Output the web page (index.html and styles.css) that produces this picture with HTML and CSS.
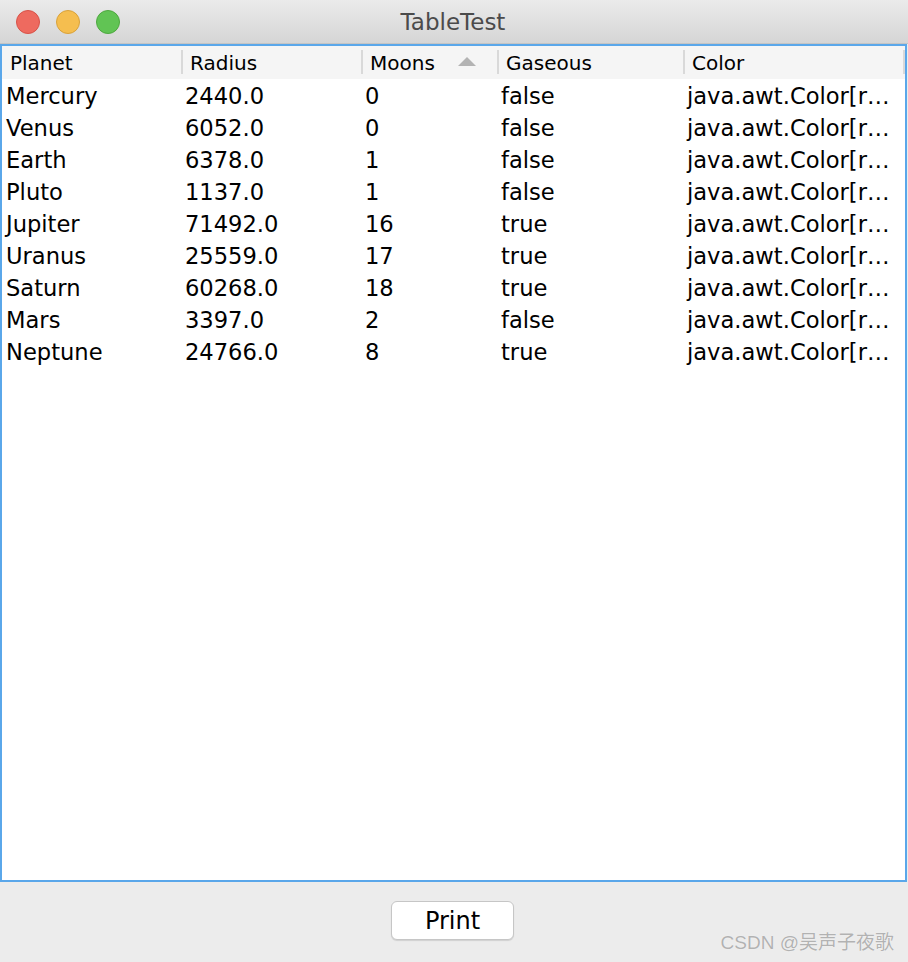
FILE: index.html
```html
<!DOCTYPE html>
<html lang="en">
<head>
    <meta charset="UTF-8">
    <title>TableTest</title>
    <link rel="stylesheet" href="styles.css">
</head>
<body>
    <div class="window">
        <div class="titlebar">
            <div class="lights">
                <span class="light red"></span>
                <span class="light yellow"></span>
                <span class="light green"></span>
            </div>
            <div class="title">TableTest</div>
            <div></div>
        </div>

        <div class="table-pane">
            <div class="table">
                <div class="head first">Planet</div>
                <div class="head">Radius</div>
                <div class="head sorted">Moons <span class="sort-arrow"></span></div>
                <div class="head">Gaseous</div>
                <div class="head last">Color</div>

                <div class="cell">Mercury</div><div class="cell">2440.0</div><div class="cell">0</div><div class="cell">false</div><div class="cell">java.awt.Color[r…</div>
                <div class="cell">Venus</div><div class="cell">6052.0</div><div class="cell">0</div><div class="cell">false</div><div class="cell">java.awt.Color[r…</div>
                <div class="cell">Earth</div><div class="cell">6378.0</div><div class="cell">1</div><div class="cell">false</div><div class="cell">java.awt.Color[r…</div>
                <div class="cell">Pluto</div><div class="cell">1137.0</div><div class="cell">1</div><div class="cell">false</div><div class="cell">java.awt.Color[r…</div>
                <div class="cell">Jupiter</div><div class="cell">71492.0</div><div class="cell">16</div><div class="cell">true</div><div class="cell">java.awt.Color[r…</div>
                <div class="cell">Uranus</div><div class="cell">25559.0</div><div class="cell">17</div><div class="cell">true</div><div class="cell">java.awt.Color[r…</div>
                <div class="cell">Saturn</div><div class="cell">60268.0</div><div class="cell">18</div><div class="cell">true</div><div class="cell">java.awt.Color[r…</div>
                <div class="cell">Mars</div><div class="cell">3397.0</div><div class="cell">2</div><div class="cell">false</div><div class="cell">java.awt.Color[r…</div>
                <div class="cell">Neptune</div><div class="cell">24766.0</div><div class="cell">8</div><div class="cell">true</div><div class="cell">java.awt.Color[r…</div>
            </div>
        </div>

        <div class="button-bar">
            <button class="print-btn">Print</button>
        </div>

        <div class="watermark">CSDN @吴声子夜歌</div>
    </div>
</body>
</html>
```

FILE: styles.css
```css
body {
    margin: 0;
    background-color: #ececec;
    font-family: "DejaVu Sans", Verdana, sans-serif;
    color: #000;
}

.window {
    position: relative;
    height: 962px;
    display: flex;
    flex-direction: column;
}

/* Title bar */
.titlebar {
    height: 44px;
    display: grid;
    grid-template-columns: 1fr auto 1fr;
    align-items: center;
    background: linear-gradient(#ebebeb, #d5d5d5);
    box-sizing: border-box;
    border-bottom: 1px solid #c4c4c4;
}

.lights {
    display: flex;
    gap: 16px;
    padding-left: 16px;
}

.light {
    width: 24px;
    height: 24px;
    border-radius: 50%;
    box-sizing: border-box;
}

.light.red {
    background-color: #ee6a5f;
    border: 1px solid #d85248;
}

.light.yellow {
    background-color: #f5be4f;
    border: 1px solid #d9a23a;
}

.light.green {
    background-color: #61c454;
    border: 1px solid #4ea83f;
}

.title {
    font-size: 23px;
    color: #4b4b4b;
    padding-right: 2px;
}

/* Table */
.table-pane {
    height: 838px;
    margin-right: 1px;
    border: 2px solid #5aa7ea;
    background: #fff;
    box-sizing: border-box;
    overflow: hidden;
}

.table {
    display: grid;
    grid-template-columns: 179px 180px 136px 186px 1fr;
    grid-template-rows: 34px;
    grid-auto-rows: 32px;
}

.head {
    height: 33px;
    background-color: #f5f5f5;
    font-size: 20px;
    display: flex;
    align-items: center;
    padding-left: 7px;
    border-left: 2px solid #d9d9d9;
    border-image: linear-gradient(#f5f5f5 5px, #d9d9d9 5px, #d9d9d9 27px, #f5f5f5 27px) 1;
    box-sizing: border-box;
    position: relative;
}

.head.first {
    border-left: none;
    border-image: none;
    padding-left: 8px;
}

.head.last {
    border-right: 2px solid #d9d9d9;
}

.sort-arrow {
    position: absolute;
    right: 21px;
    top: 11px;
    width: 0;
    height: 0;
    border-left: 9px solid transparent;
    border-right: 9px solid transparent;
    border-bottom: 9px solid #b3b3b3;
}

.cell {
    font-size: 22.6px;
    padding-left: 4px;
    display: flex;
    align-items: center;
    white-space: nowrap;
    overflow: hidden;
}

/* Bottom bar */
.button-bar {
    flex: 1;
    display: flex;
    justify-content: center;
    align-items: flex-start;
    padding-top: 19px;
}

.print-btn {
    width: 123px;
    height: 39px;
    margin-right: 3px;
    background: #fff;
    border: 1px solid #c6c6c6;
    border-radius: 6px;
    box-shadow: 0 1px 1px rgba(0, 0, 0, 0.12);
    font-family: "DejaVu Sans", Verdana, sans-serif;
    font-size: 24px;
    color: #000;
    padding: 0;
}

.watermark {
    position: absolute;
    right: 14px;
    bottom: 8px;
    font-family: "Liberation Sans", "Noto Sans CJK SC", sans-serif;
    font-size: 19px;
    color: #b2b2b2;
    text-shadow: 0 0 1px #fff;
}
```
